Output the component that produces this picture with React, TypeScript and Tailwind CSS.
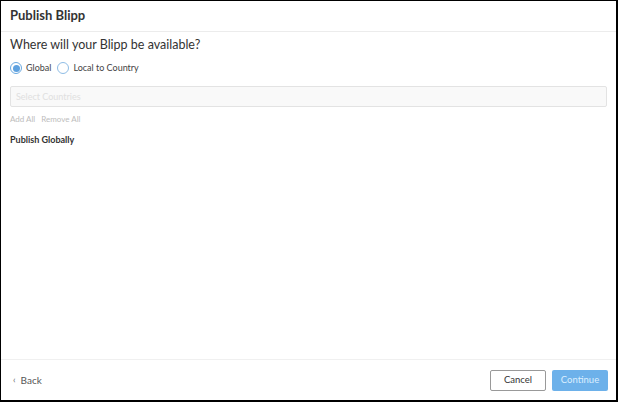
import React from "react";

export default function App() {
  return (
    <div className="w-[618px] h-[402px] bg-black pl-px pt-px pr-[2px] pb-[2px] font-['Lato',sans-serif]">
      <div className="flex h-full w-full flex-col bg-white">
        {/* Header */}
        <div className="flex h-[31px] items-center border-b border-[#ececec] px-[9px]">
          <h1 className="text-[13px] font-bold text-[#333]">Publish Blipp</h1>
        </div>

        {/* Body */}
        <div className="flex-1 px-[9px]">
          <p className="mt-[4px] text-[12.5px] leading-[18px] text-[#333]">Where will your Blipp be available?</p>

          <div className="mt-[8px] flex h-[12px] items-center text-[9px] leading-[12px] text-[#444]">
            <span className="flex h-[12px] w-[12px] items-center justify-center rounded-full border border-[#6aa9e0]">
              <span className="h-[7px] w-[7px] rounded-full bg-[#5fa2e0]" />
            </span>
            <span className="ml-[4px]">Global</span>
            <span className="ml-[6px] h-[12px] w-[12px] rounded-full border border-[#8fbde6]" />
            <span className="ml-[4px]">Local to Country</span>
          </div>

          <div className="mt-[12px] flex h-[21px] items-center rounded-[2px] border border-[#e3e3e3] bg-[#f9f9f9] px-[5px] text-[9px] text-[#e0e0e0]">
            Select Countries
          </div>

          <div className="mt-[7px] flex gap-[6px] text-[8px] leading-[10px] text-[#bdbdbd]">
            <span>Add All</span>
            <span>Remove All</span>
          </div>

          <p className="mt-[10px] text-[9px] font-bold leading-[12px] text-[#333]">Publish Globally</p>
        </div>

        {/* Footer */}
        <div className="flex h-[41px] items-center justify-between border-t border-[#f0f0f0] pl-[12px] pr-[8px]">
          <button className="flex items-center gap-[5px] text-[10px] text-[#555]">
            <span className="text-[9px] text-[#666]">‹</span>
            <span>Back</span>
          </button>
          <div className="flex gap-[6px]">
            <button className="h-[21px] w-[56px] rounded-[2px] border border-[#999] bg-white text-[9.5px] text-[#333]">
              Cancel
            </button>
            <button className="h-[21px] w-[56px] rounded-[2px] bg-[#6db1ea] text-[9.5px] text-[#dcefff]">
              Continue
            </button>
          </div>
        </div>
      </div>
    </div>
  );
}
